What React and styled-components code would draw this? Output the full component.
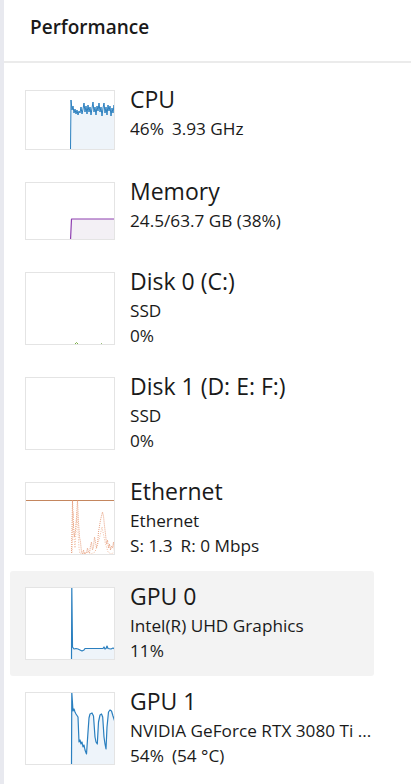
import React from "react";
import styled, { createGlobalStyle } from "styled-components";

const Global = createGlobalStyle`
  html, body { margin: 0; padding: 0; background: #ffffff; }
  body { font-family: "Open Sans", "Noto Sans", Arial, sans-serif; color: #1b1b1b; }
  * { box-sizing: border-box; }
`;

const Page = styled.div`
  display: flex;
  min-height: 784px;
  width: 411px;
  overflow: hidden;
`;

const Rail = styled.div`
  width: 4px;
  flex: none;
  background: #e8e9ef;
`;

const Panel = styled.div`
  flex: 1;
  display: flex;
  flex-direction: column;
  min-width: 0;
`;

const Header = styled.header`
  height: 63px;
  display: flex;
  align-items: center;
  padding: 0 0 8px 26px;
  border-bottom: 2px solid #ebebeb;
`;

const Title = styled.h1`
  margin: 0;
  font-size: 19px;
  font-weight: 600;
  color: #1a1a1a;
  letter-spacing: 0;
`;

const List = styled.div`
  display: flex;
  flex-direction: column;
  padding: 11px 0 0 6px;
`;

const Row = styled.div`
  width: 364px;
  display: flex;
  align-items: flex-start;
  gap: 15px;
  padding: 16px 0 16px 15px;
  border-radius: 3px;
  background: ${(p) => (p.$selected ? "#f3f3f3" : "transparent")};
`;

const Thumb = styled.div`
  width: 90px;
  height: ${(p) => p.$h}px;
  flex: none;
  border: 1px solid #e4e4e4;
  background: #fff;
  svg { display: block; }
`;

const Info = styled.div`
  display: flex;
  flex-direction: column;
  min-width: 0;
  margin: -5px 0 -10px;
`;

const Name = styled.div`
  font-size: 23px;
  line-height: 28px;
  color: #1a1a1a;
  white-space: nowrap;
`;

const Line = styled.div`
  display: flex;
  gap: 8px;
  font-size: 17.2px;
  line-height: 25px;
  color: #1a1a1a;
  white-space: nowrap;
  overflow: hidden;
  margin-top: ${(p) => (p.$first ? "3px" : "0")};
`;

function Chart({ h, children }) {
  return (
    <Thumb $h={h}>
      <svg width={88} height={h - 2} viewBox={`1 1 88 ${h - 2}`}>
        {children}
      </svg>
    </Thumb>
  );
}

const blue = "#2a7fbf";
const blueFill = "#eef4fa";

function toPts(arr) {
  return arr.map(([x, y]) => `${x},${y}`).join(" ");
}

function AreaLine({ pts, h, stroke, fill, dash, width = 1 }) {
  const area = [[pts[0][0], h], ...pts, [pts[pts.length - 1][0], h]];
  return (
    <>
      {fill && <polygon points={toPts(area)} fill={fill} stroke="none" />}
      <polyline
        points={toPts(pts)}
        fill="none"
        stroke={stroke}
        strokeWidth={width}
        strokeDasharray={dash}
        strokeLinejoin="round"
      />
    </>
  );
}

const cpuPts = [
  [45.5, 60], [46, 10], [47, 20], [48, 16], [49, 23], [50, 19], [51, 24], [52, 20],
  [53, 25], [54, 21], [55, 23], [56, 17], [57, 24], [58, 19], [59, 13], [60, 22],
  [61, 16], [62, 24], [63, 15], [64, 22], [65, 17], [66, 25], [67, 18], [68, 12],
  [69, 22], [70, 17], [71, 25], [72, 16], [73, 21], [74, 13], [75, 22], [76, 17],
  [77, 26], [78, 18], [79, 13], [80, 23], [81, 17], [82, 25], [83, 15], [84, 21],
  [85, 16], [86, 26], [87, 18], [88, 23], [89, 15], [90, 22],
];

const memPts = [[45.5, 58], [46.5, 37], [90, 37]];

const gpu0Pts = [
  [46.5, 73], [46.8, 0.5], [47.5, 60], [49, 62], [51, 61.5], [53, 62], [55, 63],
  [57, 64], [59, 63], [60, 61.5], [63, 61.5], [70, 61.5], [78, 61.5], [79, 60],
  [80, 62], [81, 61.5], [82, 59], [83, 61.5], [86, 62], [88, 61], [90, 62],
];

const gpu1Pts = [
  [46.5, 73], [46.8, 0.5], [48, 19], [49, 17], [50, 20], [51, 22], [53, 25],
  [54, 50], [55, 48], [56, 52], [57, 50], [58, 55], [59, 53], [60, 58], [61.5, 62],
  [63, 40], [64, 26], [65, 22], [67, 21], [68.5, 24], [70, 45], [71, 50], [72.3, 52],
  [73.5, 30], [75, 23], [76.5, 22], [77.7, 25], [79, 45], [80, 52], [81, 57],
  [82, 35], [83.5, 20], [85, 18], [86.5, 19], [88, 24], [90, 30],
];

const ethSend = [
  [46.5, 73], [47.5, 18], [48.5, 45], [49.5, 55], [50.5, 48], [51.5, 35], [52.5, 18],
  [53.5, 40], [54.5, 55], [55.5, 60], [56.5, 70], [57.5, 72], [58.5, 68], [59.5, 72],
  [60.5, 70], [61.5, 71], [62.5, 66], [63.5, 70], [64.5, 71], [65.5, 64], [66.5, 60],
  [67.5, 68], [68.5, 65], [69.5, 55], [70.5, 60], [71.5, 66], [72.5, 62], [73.5, 50],
  [74.5, 44], [75.5, 38], [76.5, 34], [77.5, 30], [78.5, 34], [79.5, 44], [80.5, 52],
  [81.5, 62], [82.5, 58], [83.5, 66], [84.5, 62], [85.5, 68], [86.5, 64], [87.5, 66],
  [88.5, 60], [89.5, 70],
];
const ethRecv = [
  [47, 73], [48, 30], [49, 55], [50, 66], [51, 50], [52, 30], [53, 50], [54, 66],
  [55, 72], [60, 72], [63, 70], [66, 72], [70, 70], [74, 58], [77, 45], [80, 60],
  [83, 70], [86, 72], [90, 70],
];

const items = [
  {
    name: "CPU",
    h: 60,
    lines: [["46%", "3.93 GHz"]],
    chart: <AreaLine pts={cpuPts} h={60} stroke={blue} fill={blueFill} />,
  },
  {
    name: "Memory",
    h: 58,
    lines: [["24.5/63.7 GB (38%)"]],
    chart: <AreaLine pts={memPts} h={58} stroke="#8e3fb0" fill="#f3f0f5" width={1.2} />,
  },
  {
    name: "Disk 0 (C:)",
    h: 73,
    lines: [["SSD"], ["0%"]],
    chart: (
      <>
        <polyline points="50,72 51.5,70.5 53,72" fill="none" stroke="#7bb045" strokeWidth="1" />
        <line x1="76" y1="71.5" x2="77" y2="71.5" stroke="#9bbf7a" strokeWidth="1" />
      </>
    ),
  },
  {
    name: "Disk 1 (D: E: F:)",
    h: 73,
    lines: [["SSD"], ["0%"]],
    chart: null,
  },
  {
    name: "Ethernet",
    h: 73,
    lines: [["Ethernet"], ["S: 1.3", "R: 0 Mbps"]],
    chart: (
      <>
        <line x1="0" y1="18.5" x2="90" y2="18.5" stroke="#c4865e" strokeWidth="1" />
        <AreaLine pts={ethSend} h={73} stroke="#e5967000" />
        <AreaLine pts={ethSend} h={73} stroke="#e39572" dash="1 1" width={0.9} />
        <AreaLine pts={ethRecv} h={73} stroke="#efb394" dash="1 1.5" width={0.9} />
      </>
    ),
  },
  {
    name: "GPU 0",
    h: 73,
    selected: true,
    lines: [["Intel(R) UHD Graphics"], ["11%"]],
    chart: <AreaLine pts={gpu0Pts} h={73} stroke={blue} fill={blueFill} width={1.2} />,
  },
  {
    name: "GPU 1",
    h: 73,
    lines: [["NVIDIA GeForce RTX 3080 Ti ..."], ["54%", "(54 °C)"]],
    chart: <AreaLine pts={gpu1Pts} h={73} stroke={blue} fill={blueFill} width={1.2} />,
  },
];

export default function App() {
  return (
    <>
      <Global />
      <Page>
        <Rail />
        <Panel>
          <Header>
            <Title>Performance</Title>
          </Header>
          <List>
            {items.map((it) => (
              <Row key={it.name} $selected={it.selected}>
                <Chart h={it.h}>{it.chart}</Chart>
                <Info>
                  <Name>{it.name}</Name>
                  {it.lines.map((parts, i) => (
                    <Line key={i} $first={i === 0}>
                      {parts.map((p) => (
                        <span key={p}>{p}</span>
                      ))}
                    </Line>
                  ))}
                </Info>
              </Row>
            ))}
          </List>
        </Panel>
      </Page>
    </>
  );
}
